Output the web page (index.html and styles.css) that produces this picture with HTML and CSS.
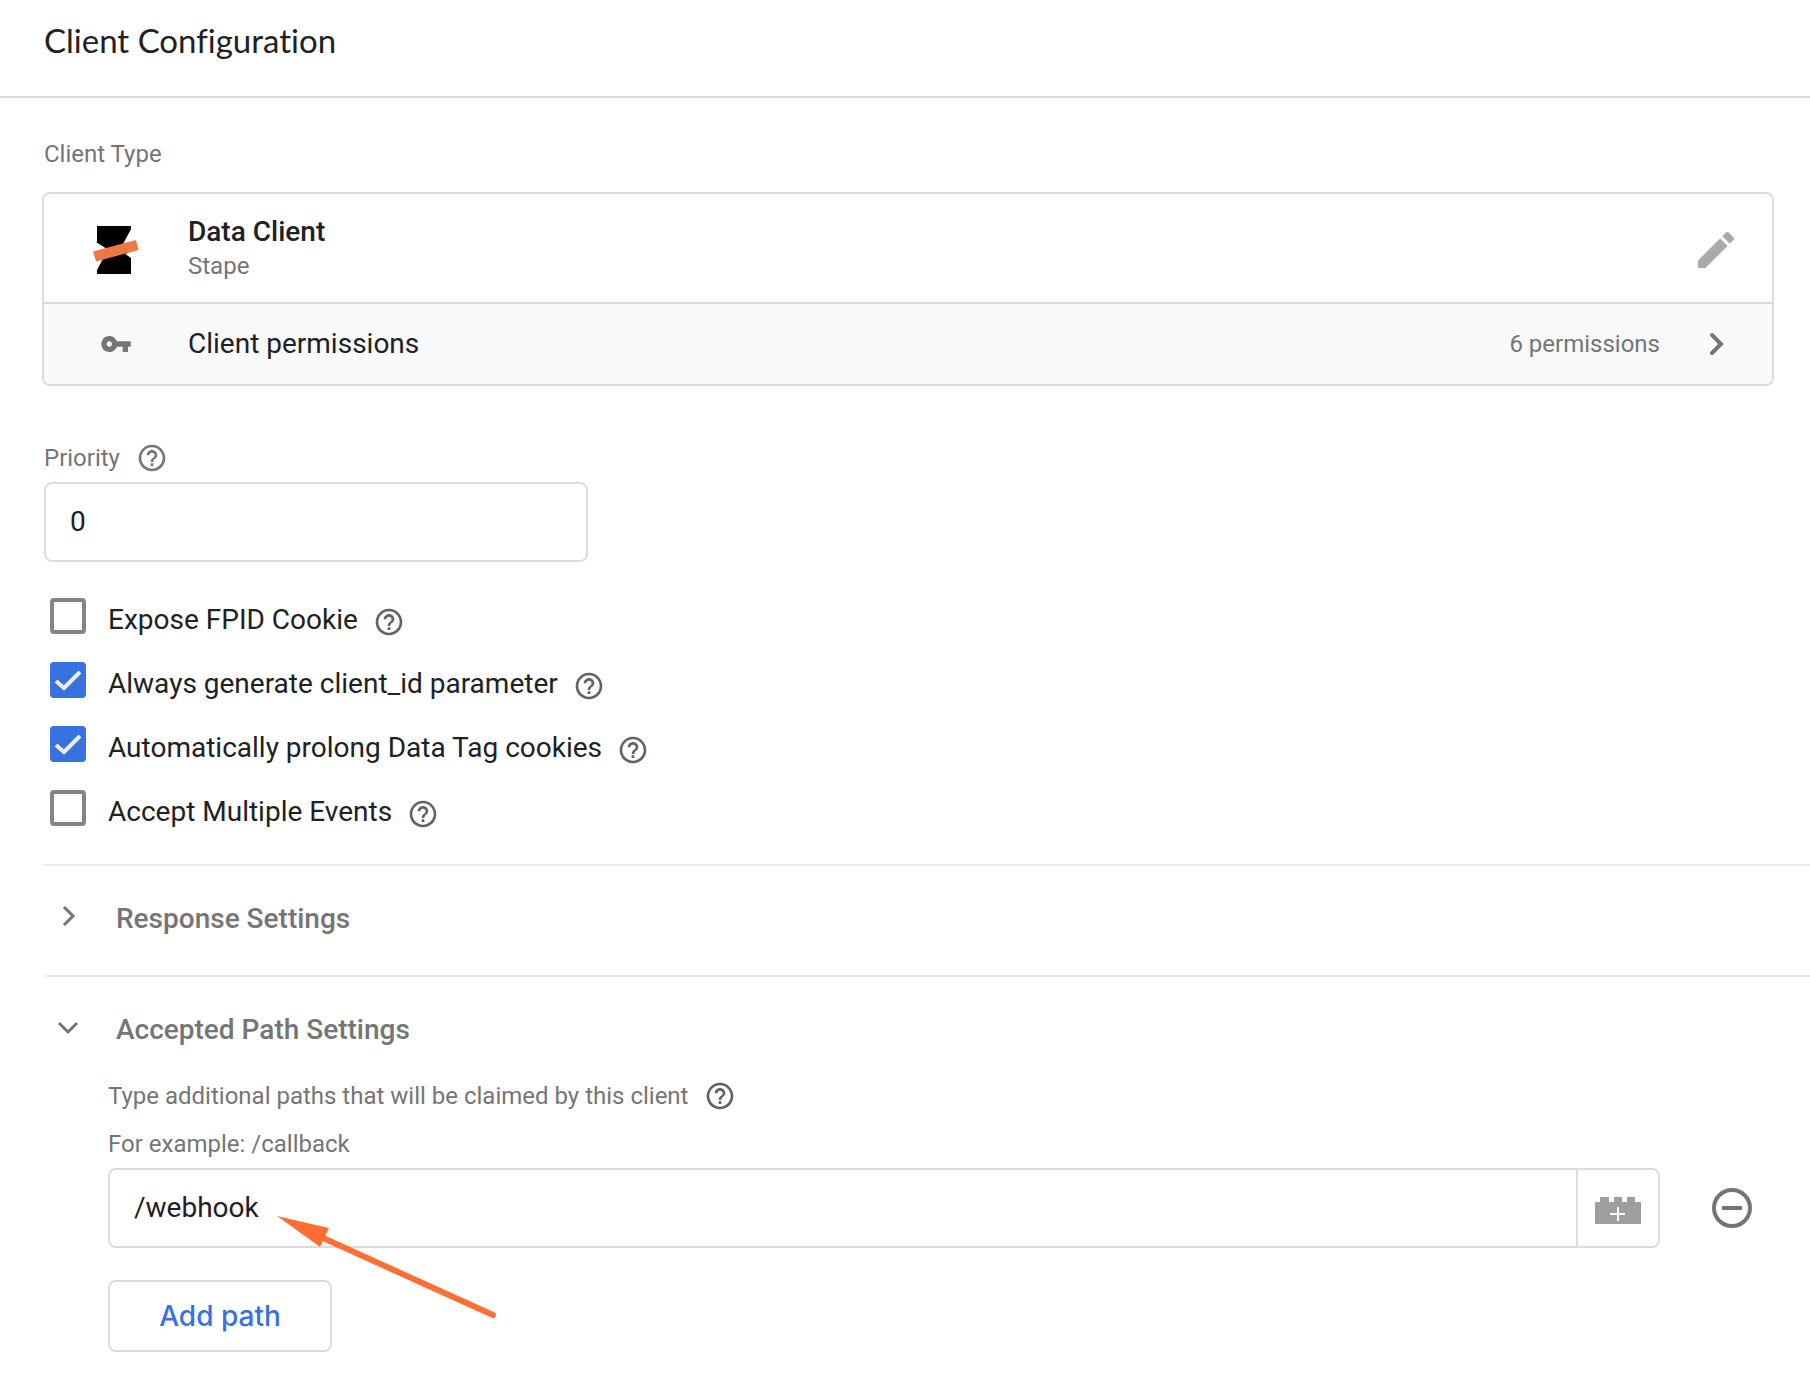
FILE: index.html
```html
<!DOCTYPE html>
<html lang="en">
<head>
<meta charset="utf-8">
<meta name="viewport" content="width=device-width, initial-scale=1">
<title>Client Configuration</title>
<link rel="stylesheet" href="styles.css">
</head>
<body>
<svg class="sprite" aria-hidden="true">
  <symbol id="help" viewBox="0 0 24 24"><path d="M11 18h2v-2h-2v2zm1-16C6.480 2 2 6.480 2 12s4.480 10 10 10 10-4.480 10-10S17.520 2 12 2zm0 18c-4.410 0-8-3.590-8-8s3.590-8 8-8 8 3.590 8 8-3.590 8-8 8zm0-14c-2.210 0-4 1.790-4 4h2c0-1.100.9-2 2-2s2 .9 2 2c0 2-3 1.750-3 5h2c0-2.250 3-2.500 3-5 0-2.210-1.790-4-4-4z"/></symbol>
</svg>

<header class="header">
  <h1 class="title">Client Configuration</h1>
</header>

<main class="content">
  <h2 class="caption">Client Type</h2>

  <section class="card">
    <div class="card-row">
      <span class="card-icon">
        <svg class="logo" viewBox="0 0 46 48" aria-hidden="true">
          <path d="M4 0H38V3L29 20L4 17Z"/>
          <path d="M4 48V44L12 29L31 27L38 32V48Z"/>
          <path d="M3 16L14 23L34 28L31 18Z"/>
          <path class="logo-band" d="M0 25.500L43 14L45.500 24L3 35.500Z"/>
        </svg>
      </span>
      <div class="card-text">
        <div class="card-name">Data Client</div>
        <div class="card-vendor">Stape</div>
      </div>
      <button class="icon-button" type="button" aria-label="Edit client type">
        <svg class="pencil" viewBox="0 0 24 24" aria-hidden="true"><path d="M3 17.250V21h3.750L17.810 9.940l-3.750-3.750L3 17.250zM20.710 7.040c.39-.39.39-1.020 0-1.410l-2.340-2.340c-.39-.39-1.020-.39-1.410 0l-1.830 1.830 3.750 3.750 1.830-1.830z"/></svg>
      </button>
    </div>
    <button class="card-row permissions" type="button">
      <span class="card-icon">
        <svg class="key" viewBox="0 0 24 24" aria-hidden="true"><path d="M12.650 10C11.830 7.670 9.610 6 7 6c-3.310 0-6 2.690-6 6s2.690 6 6 6c2.610 0 4.830-1.670 5.650-4H17v4h4v-4h2v-4H12.650zM7 14c-1.100 0-2-.9-2-2s.9-2 2-2 2 .9 2 2-.9 2-2 2z"/></svg>
      </span>
      <span class="card-text">Client permissions</span>
      <span class="permission-count">6 permissions</span>
      <span class="icon-button"><svg class="chevron" viewBox="0 0 24 24" aria-hidden="true"><path d="M8 3L17 12L8 21"/></svg></span>
    </button>
  </section>

  <div class="label-row">
    <label class="caption" for="priority">Priority</label>
    <svg class="help priority-help" role="img" aria-label="Help"><use href="#help"/></svg>
  </div>
  <input class="field priority" id="priority" type="text" value="0">

  <div class="checks">
    <div class="check-row">
      <input class="check" type="checkbox" id="fpid">
      <label for="fpid">Expose FPID Cookie</label>
      <svg class="help" role="img" aria-label="Help"><use href="#help"/></svg>
    </div>
    <div class="check-row">
      <input class="check" type="checkbox" id="client-id" checked>
      <label for="client-id">Always generate client_id parameter</label>
      <svg class="help" role="img" aria-label="Help"><use href="#help"/></svg>
    </div>
    <div class="check-row">
      <input class="check" type="checkbox" id="prolong" checked>
      <label for="prolong">Automatically prolong Data Tag cookies</label>
      <svg class="help" role="img" aria-label="Help"><use href="#help"/></svg>
    </div>
    <div class="check-row">
      <input class="check" type="checkbox" id="multiple">
      <label for="multiple">Accept Multiple Events</label>
      <svg class="help" role="img" aria-label="Help"><use href="#help"/></svg>
    </div>
  </div>

  <section class="group collapsed">
    <button class="group-header" type="button" aria-expanded="false">
      <svg class="toggle" viewBox="0 0 32 32" aria-hidden="true"><path d="M12 7L21 16L12 25"/></svg>
      Response Settings
    </button>
  </section>

  <section class="group">
    <button class="group-header" type="button" aria-expanded="true">
      <svg class="toggle" viewBox="0 0 32 32" aria-hidden="true"><path d="M7 12L16 21L25 12"/></svg>
      Accepted Path Settings
    </button>
    <div class="group-body">
      <div class="label-row">
        <span class="caption">Type additional paths that will be claimed by this client</span>
        <svg class="help" role="img" aria-label="Help"><use href="#help"/></svg>
      </div>
      <label class="caption example" for="path">For example: /callback</label>
      <div class="path-row">
        <div class="path-field">
          <input class="path-input" id="path" type="text" value="/webhook">
          <button class="variable" type="button" aria-label="Insert variable">
            <svg class="brick" viewBox="0 0 46 27" aria-hidden="true"><path class="brick-body" d="M0 5H5V0H14V5H19V0H27V5H32V0H40V5H46V27H0Z"/><path class="brick-plus" d="M15 17H30M23 10V24"/></svg>
          </button>
        </div>
        <button class="remove" type="button" aria-label="Remove path">
          <svg class="minus" viewBox="0 0 40 40" aria-hidden="true"><circle cx="20" cy="20" r="18"/><path d="M10 20H30"/></svg>
        </button>
        <svg class="pointer" viewBox="0 0 220 104" aria-hidden="true"><path class="pointer-line" d="M46 22L216 99"/><path class="pointer-head" d="M0 0L52 12L43 31Z"/></svg>
      </div>
      <button class="add" type="button">Add path</button>
    </div>
  </section>
</main>
</body>
</html>
```

FILE: styles.css
```css
* { box-sizing: border-box; }

body {
  margin: 0;
  background: #fff;
  color: #202124;
  font: 28px/32px Roboto, sans-serif;
}

button, input { font: inherit; color: inherit; margin: 0; }
button { padding: 0; border: 0; background: none; cursor: pointer; }
svg { display: block; flex: none; }

.sprite { position: absolute; width: 0; height: 0; }

.header {
  height: 98px;
  padding: 20px 44px;
  border-bottom: 2px solid #dadce0;
}
.title {
  margin: 0;
  font: 400 33px/40px "Google Sans", Lato, sans-serif;
  font-variant-ligatures: none;
}

.content { padding: 40px 0 20px 44px; }

.caption {
  margin: 0;
  color: #757575;
  font-size: 24px;
  font-weight: 400;
  line-height: 32px;
}

/* Client type card */
.card {
  margin: 22px 36px 0 -2px;
  border: 2px solid #dadce0;
  border-radius: 8px;
  overflow: hidden;
}
.card-row {
  display: flex;
  align-items: center;
  width: 100%;
  min-height: 108px;
  padding-right: 32px;
  text-align: left;
}
.card-icon { display: flex; justify-content: center; width: 144px; }
.card-text { flex: 1; }
.card-name { font-weight: 500; line-height: 36px; }
.card-vendor { color: #757575; font-size: 24px; }
.permissions {
  min-height: 82px;
  border-top: 2px solid #dadce0;
  background: #f8f9fb;
}
.permission-count { margin-right: 32px; color: #757575; font-size: 24px; }
.icon-button { display: flex; justify-content: center; width: 48px; }
.logo, .pencil { height: 48px; margin-top: 4px; }
.logo { width: 46px; }
.logo-band { fill: #ee7844; }
.key { width: 32px; height: 32px; fill: #757575; }
.pencil { width: 48px; fill: #aaa; }
.chevron {
  width: 24px;
  height: 24px;
  fill: none;
  stroke: #757575;
  stroke-width: 4;
  stroke-linecap: round;
}

/* Fields */
.label-row { display: flex; align-items: center; gap: 16px; }
.help { width: 32px; height: 32px; fill: #5f6368; }
.priority-help { fill: #757575; }
.card + .label-row { margin-top: 56px; }
.field {
  display: block;
  height: 80px;
  padding: 0 24px 2px;
  border: 2px solid #dadce0;
  border-radius: 8px;
  background: #fff;
}
.priority { width: 544px; max-width: 100%; margin-top: 8px; }

.checks { padding: 26px 0 20px 6px; }
.check-row { display: flex; align-items: center; gap: 15px; height: 64px; }
.check-row .help { margin-top: 4px; }
.check {
  appearance: none;
  width: 36px;
  height: 36px;
  margin: 0 7px 8px 0;
  border: 4px solid #80868b;
  border-radius: 4px;
}
.check:checked {
  border: 0;
  background: #3871e0 url("data:image/svg+xml,%3Csvg xmlns='http://www.w3.org/2000/svg' viewBox='0 0 36 36'%3E%3Cpath d='M6 19L14 26L30 10' fill='none' stroke='%23eee' stroke-width='4'/%3E%3C/svg%3E");
}

/* Collapsible groups */
.group { border-top: 2px solid #e8eaed; }
.collapsed { padding-bottom: 6px; }
.group-header {
  display: flex;
  align-items: center;
  gap: 32px;
  width: 100%;
  padding: 34px 0 31px 8px;
  color: #757575;
  font-weight: 500;
  text-align: left;
}
.toggle {
  width: 32px;
  height: 32px;
  margin-bottom: 6px;
  fill: none;
  stroke: #757575;
  stroke-width: 3;
}
.group-body { padding-left: 64px; }
.example { display: block; margin-top: 16px; }

.path-row {
  position: relative;
  display: flex;
  align-items: center;
  gap: 52px;
  margin-top: 8px;
  padding-right: 58px;
}
.path-field {
  display: flex;
  flex: 1;
  height: 80px;
  border: 2px solid #dadce0;
  border-radius: 8px;
}
.path-input {
  flex: 1;
  min-width: 0;
  padding: 0 24px;
  border: 0;
  border-radius: 8px;
  background: none;
}
.variable {
  display: flex;
  align-items: center;
  justify-content: center;
  width: 82px;
  border-left: 2px solid #dadce0;
}
.brick { width: 46px; height: 27px; margin-top: 4px; }
.brick-body { fill: #9e9e9e; }
.brick-plus { fill: none; stroke: #fff; stroke-width: 2; }
.minus { width: 40px; height: 40px; fill: none; stroke: #757575; stroke-width: 4; }
.pointer { position: absolute; top: 48px; left: 169px; width: 220px; height: 104px; pointer-events: none; }
.pointer-line { fill: none; stroke: #ff6e35; stroke-width: 6; stroke-linecap: round; }
.pointer-head { fill: #ff6e35; }

.add {
  width: 224px;
  height: 72px;
  margin-top: 32px;
  border: 2px solid #dadce0;
  border-radius: 8px;
  color: #3871e0;
  font-family: "Google Sans", Inter, sans-serif;
  font-weight: 500;
}
```
